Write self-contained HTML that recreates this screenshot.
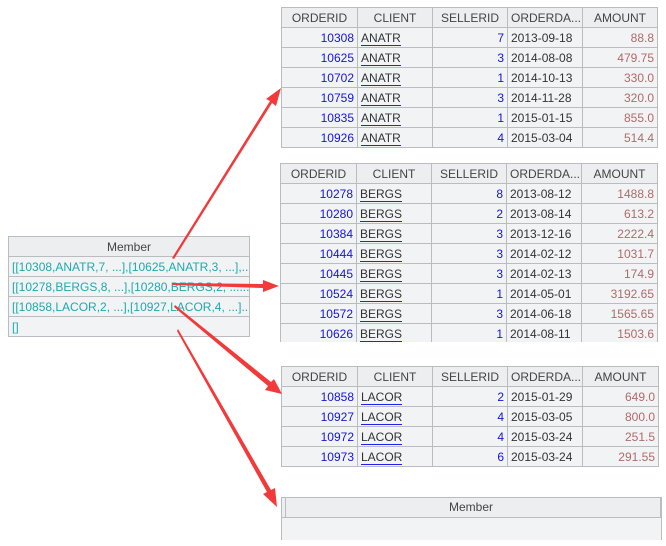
<!DOCTYPE html>
<html><head><meta charset="utf-8"><style>
body{margin:0;width:666px;height:546px;background:#fff;position:relative;overflow:hidden;font-family:"Liberation Sans",Arial,sans-serif;font-size:12px}
table{position:absolute;border-collapse:collapse;table-layout:fixed;background:#f2f3f4}
td,th{border:1px solid #b9bdc1;height:19px;padding:0 3px;white-space:nowrap;overflow:hidden;font-weight:normal}
th{background:#eceef0;color:#444;text-align:center}
.id{color:#1414e0;text-align:right}
.cl{color:#333}
.cl span{border-bottom:1px solid #2020f0}
.s{color:#1414e0;text-align:right}
.d{color:#333}
.a{color:#b06a6a;text-align:right}
.m td{color:#1fa8b0}
.wrap{position:absolute;overflow:hidden}
</style></head><body>

<table style="left:281px;top:7px;width:376px">
<colgroup><col style="width:76px"><col style="width:75px"><col style="width:75px"><col style="width:75px"><col style="width:75px"></colgroup>
<tr><th>ORDERID</th><th>CLIENT</th><th>SELLERID</th><th>ORDERDA...</th><th>AMOUNT</th></tr>
<tr><td class="id">10308</td><td class="cl"><span>ANATR</span></td><td class="s">7</td><td class="d">2013-09-18</td><td class="a">88.8</td></tr>
<tr><td class="id">10625</td><td class="cl"><span>ANATR</span></td><td class="s">3</td><td class="d">2014-08-08</td><td class="a">479.75</td></tr>
<tr><td class="id">10702</td><td class="cl"><span>ANATR</span></td><td class="s">1</td><td class="d">2014-10-13</td><td class="a">330.0</td></tr>
<tr><td class="id">10759</td><td class="cl"><span>ANATR</span></td><td class="s">3</td><td class="d">2014-11-28</td><td class="a">320.0</td></tr>
<tr><td class="id">10835</td><td class="cl"><span>ANATR</span></td><td class="s">1</td><td class="d">2015-01-15</td><td class="a">855.0</td></tr>
<tr><td class="id">10926</td><td class="cl"><span>ANATR</span></td><td class="s">4</td><td class="d">2015-03-04</td><td class="a">514.4</td></tr>
</table>

<div class="wrap" style="left:280px;top:163px;width:386px;height:179px">
<table style="left:0;top:0;width:377px">
<colgroup><col style="width:76px"><col style="width:75px"><col style="width:75px"><col style="width:75px"><col style="width:76px"></colgroup>
<tr><th>ORDERID</th><th>CLIENT</th><th>SELLERID</th><th>ORDERDA...</th><th>AMOUNT</th></tr>
<tr><td class="id">10278</td><td class="cl"><span>BERGS</span></td><td class="s">8</td><td class="d">2013-08-12</td><td class="a">1488.8</td></tr>
<tr><td class="id">10280</td><td class="cl"><span>BERGS</span></td><td class="s">2</td><td class="d">2013-08-14</td><td class="a">613.2</td></tr>
<tr><td class="id">10384</td><td class="cl"><span>BERGS</span></td><td class="s">3</td><td class="d">2013-12-16</td><td class="a">2222.4</td></tr>
<tr><td class="id">10444</td><td class="cl"><span>BERGS</span></td><td class="s">3</td><td class="d">2014-02-12</td><td class="a">1031.7</td></tr>
<tr><td class="id">10445</td><td class="cl"><span>BERGS</span></td><td class="s">3</td><td class="d">2014-02-13</td><td class="a">174.9</td></tr>
<tr><td class="id">10524</td><td class="cl"><span>BERGS</span></td><td class="s">1</td><td class="d">2014-05-01</td><td class="a">3192.65</td></tr>
<tr><td class="id">10572</td><td class="cl"><span>BERGS</span></td><td class="s">3</td><td class="d">2014-06-18</td><td class="a">1565.65</td></tr>
<tr><td class="id">10626</td><td class="cl"><span>BERGS</span></td><td class="s">1</td><td class="d">2014-08-11</td><td class="a">1503.6</td></tr>
</table></div>

<table style="left:281px;top:366px;width:377px">
<colgroup><col style="width:76px"><col style="width:75px"><col style="width:75px"><col style="width:75px"><col style="width:76px"></colgroup>
<tr><th>ORDERID</th><th>CLIENT</th><th>SELLERID</th><th>ORDERDA...</th><th>AMOUNT</th></tr>
<tr><td class="id">10858</td><td class="cl"><span>LACOR</span></td><td class="s">2</td><td class="d">2015-01-29</td><td class="a">649.0</td></tr>
<tr><td class="id">10927</td><td class="cl"><span>LACOR</span></td><td class="s">4</td><td class="d">2015-03-05</td><td class="a">800.0</td></tr>
<tr><td class="id">10972</td><td class="cl"><span>LACOR</span></td><td class="s">4</td><td class="d">2015-03-24</td><td class="a">251.5</td></tr>
<tr><td class="id">10973</td><td class="cl"><span>LACOR</span></td><td class="s">6</td><td class="d">2015-03-24</td><td class="a">291.55</td></tr>
</table>

<div style="position:absolute;left:281px;top:497px;width:379px;height:43px;background:#f2f3f4;border-left:1px solid #b9bdc1;border-right:1px solid #b9bdc1"></div>
<div style="position:absolute;left:281px;top:497px;width:378px;height:19px;background:#eceef0;border:1px solid #b9bdc1;color:#444;text-align:center;line-height:19px">
<div style="position:absolute;left:3px;top:0;width:1px;height:19px;background:#b9bdc1"></div>Member</div>

<table class="m" style="left:8px;top:236px;width:242px">
<tr><th>Member</th></tr>
<tr><td>[[10308,ANATR,7, ...],[10625,ANATR,3, ...],...</td></tr>
<tr><td>[[10278,BERGS,8, ...],[10280,BERGS,2, ......</td></tr>
<tr><td>[[10858,LACOR,2, ...],[10927,LACOR,4, ...]...</td></tr>
<tr><td>[]</td></tr>
</table>

<svg style="position:absolute;left:0;top:0" width="666" height="546">
<g fill="#f23a3a" stroke="none">
<polygon points="172,258 174,259 272,103 276,106 281,88 266,99 270,101"/>
<polygon points="172,283 172,285 263,288 263,292 279,286 263,280 263,284"/>
<polygon points="175,305 174,307 268,386 265,390 282,394 274,379 271,382"/>
<polygon points="178,329 177,331 267,492 263,494 277,507 275,488 271,490"/>
</g>
</svg>
</body></html>
